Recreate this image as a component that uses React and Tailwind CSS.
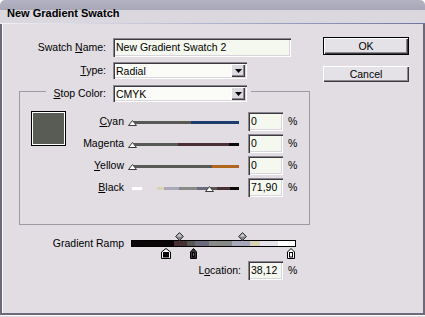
import React from "react";

const sunken = "shadow-[inset_1px_1px_0_#8a888e,inset_2px_2px_0_#3c3a40,inset_-1px_-1px_0_#ffffff,inset_-2px_-2px_0_#d8d5dc]";
const raised = "shadow-[inset_1px_1px_0_#ffffff,inset_-1px_-1px_0_#3c3a40,inset_-2px_-2px_0_#8a888e]";

const sliders = [
    { label: "Cyan", key: "C", rest: "yan", value: "0", thumb: 0, segs: [[59, "#575a54"], [48, "#1d3d6e"]] },
    { label: "Magenta", key: "", rest: "Magenta", value: "0", thumb: 0, segs: [[46, "#575a54"], [51, "#4a2f37"], [10, "#0a0808"]] },
    { label: "Yellow", key: "Y", rest: "ellow", value: "0", thumb: 0, segs: [[80, "#575a54"], [27, "#b0661c"]] },
    {
        label: "Black", key: "B", rest: "lack", value: "71,90", thumb: 77,
        segs: [[10, "#ffffff"], [15, "transparent"], [7, "#d9d4b2"], [15, "#a9a9bb"], [18, "#878a86"], [11, "#6a6a7c"], [9, "#555651"], [13, "#4a2f37"], [9, "#0a0808"]]
    }
];

const ramp = [[42, "#0a0608"], [13, "#4a2f37"], [8, "#555852"], [14, "#6a6a7c"], [23, "#888a88"], [18, "#a8a8bc"], [10, "#d8d4b2"], [18, "#e6e3ec"], [17, "#ffffff"]];

function Field({ value, className = "" }) {
    return (
        <div className={`h-[19px] ${sunken} bg-[#f5f8ee] pl-[3px] pt-[3px] leading-[12px] whitespace-nowrap ${className}`}>
            {value}
        </div>
    );
}

function Select({ value }) {
    return (
        <div className={`h-[17px] w-[134px] ${sunken} bg-[#fbfbf7] flex items-center pl-[3px] pr-[2px]`}>
            <span className="flex-1 leading-[12px]">{value}</span>
            <div className={`w-[14px] h-[13px] ${raised} bg-[#dcd9e0] flex items-center justify-center`}>
                <svg width="7" height="4" viewBox="0 0 7 4">
                    <path d="M0 0H7L3.5 4Z" fill="#000" />
                </svg>
            </div>
        </div>
    );
}

function Thumb() {
    return (
        <svg width="9" height="6" viewBox="0 0 9 6">
            <path d="M4.5 0.5L8.5 5.5H0.5Z" fill="#ffffff" stroke="#3a3a3a" />
        </svg>
    );
}

function Diamond() {
    return (
        <svg width="9" height="9" viewBox="0 0 9 9">
            <path d="M4.5 0.5L8.5 4.5L4.5 8.5L0.5 4.5Z" fill="#858589" stroke="#3a3a3a" />
            <path d="M4.5 1.8L7.2 4.5H1.8Z" fill="#cfcfd3" />
        </svg>
    );
}

function Stop({ inner, w = 10, selected = false }) {
    const r = w - 0.5;
    return (
        <svg width={w} height="11" viewBox={`0 0 ${w} 11`}>
            <path d={`M0.5 10.5V4L${w / 2} 0.5L${r} 4V10.5Z`} fill={selected ? "#3a3a3a" : "#ffffff"} stroke="#000" />
            <rect x="2.5" y="4.5" width={w - 5} height="4.5" fill={inner} stroke="#000" strokeWidth="1" />
        </svg>
    );
}

export default function App() {
    return (
        <div className="w-[425px] h-[317px] overflow-hidden bg-white font-['Liberation_Sans',Arial,sans-serif] text-[10.5px] text-black flex flex-col">
            {/* title bar */}
            <header className="h-[23px] shrink-0 rounded-t-[5px] bg-[linear-gradient(to_bottom,#b3b3c3_0px,#a7a7b7_10px,#dad7de_10px,#dad7de_23px)] pl-[7px] pt-[6px]">
                <span className="font-bold text-[11px] leading-[13px]">New Gradient Swatch</span>
            </header>
            <div className="h-px shrink-0 bg-[linear-gradient(to_right,#f2f1f5,#6e76a4)]" />

            <div className="flex-1 border-l-2 border-r-2 border-b-2 border-[#6c6a7a] bg-[#e1dde3]">
                <div className="h-full border-l border-white flex pl-[16px] pt-[14px]">
                    {/* left column */}
                    <div className="w-[291px] flex flex-col">
                        <div className="flex items-center h-[19px]">
                            <span className="w-[87px] text-right whitespace-nowrap">Swatch <span className="underline">N</span>ame:</span>
                            <Field value="New Gradient Swatch 2" className="ml-[7px] w-[178px]" />
                        </div>
                        <div className="flex items-center h-[17px] mt-[5px]">
                            <span className="w-[87px] text-right"><span className="underline">T</span>ype:</span>
                            <div className="ml-[7px]"><Select value="Radial" /></div>
                        </div>

                        <fieldset className="mt-[1px] w-[291px] border border-[#9e9aa4] pb-[27px]">
                            <legend className="ml-[26px] px-[4px] pt-[5px]">
                                <div className="flex items-center">
                                    <span className="w-[56px] text-right whitespace-nowrap"><span className="underline">S</span>top Color:</span>
                                    <div className="ml-[7px]"><Select value="CMYK" /></div>
                                </div>
                            </legend>
                            <div className="flex pt-[10px] pl-[11px]">
                                <div className="w-[35px] h-[35px] -mt-[1px] border border-black bg-white p-px">
                                    <div className="w-full h-full bg-[#595b55]" />
                                </div>
                                <div className="flex flex-col gap-[3px]">
                                    {sliders.map((s) => (
                                        <div key={s.label} className="flex items-start h-[19px]">
                                            <span className="w-[58px] text-right leading-[19px]">
                                                {s.key && <span className="underline">{s.key}</span>}{s.rest}
                                            </span>
                                            <div className="relative ml-[4px] w-[112px] h-[19px] pt-[9px] pl-[4px]">
                                                <div className="flex w-[107px] h-[3px]">
                                                    {s.segs.map(([w, c], i) => (
                                                        <div key={i} style={{ width: w, backgroundColor: c }} />
                                                    ))}
                                                </div>
                                                <div className="absolute top-[8px]" style={{ left: s.thumb }}>
                                                    <Thumb />
                                                </div>
                                            </div>
                                            <Field value={s.value} className="ml-[8px] w-[35px]" />
                                            <span className="ml-[5px] leading-[19px]">%</span>
                                        </div>
                                    ))}
                                </div>
                            </div>
                        </fieldset>

                        {/* gradient ramp */}
                        <div className="flex items-start mt-[7px]">
                            <span className="w-[105px] text-right leading-[13px] mt-[5px]">Gradient Ramp</span>
                            <div className="relative ml-[7px] w-[165px] h-[27px]">
                                <div className="mt-[8px] h-[7px] w-[165px] border border-black flex">
                                    {ramp.map(([w, c], i) => (
                                        <div key={i} style={{ width: w, backgroundColor: c }} />
                                    ))}
                                </div>
                                <div className="absolute top-0 left-[44px]"><Diamond /></div>
                                <div className="absolute top-0 left-[107px]"><Diamond /></div>
                                <div className="absolute top-[16px] left-[30px]"><Stop inner="#000000" /></div>
                                <div className="absolute top-[16px] left-[59px]"><Stop inner="#6a6a70" w={7} selected /></div>
                                <div className="absolute top-[16px] left-[156px]"><Stop inner="#ffffff" w={8} /></div>
                            </div>
                        </div>

                        <div className="flex items-center h-[19px] mt-[2px]">
                            <span className="w-[222px] text-right">L<span className="underline">o</span>cation:</span>
                            <Field value="38,12" className="ml-[7px] w-[35px]" />
                            <span className="ml-[5px]">%</span>
                        </div>
                    </div>

                    {/* buttons */}
                    <div className="ml-[13px] -mt-[1px] flex flex-col">
                        <div className="w-[86px] h-[18px] border border-black">
                            <div className={`h-full ${raised} bg-[#e4e1e7] flex items-center justify-center leading-none`}>OK</div>
                        </div>
                        <div className={`mt-[11px] w-[86px] h-[16px] ${raised} bg-[#e4e1e7] flex items-center justify-center leading-none`}>
                            Cancel
                        </div>
                    </div>
                </div>
            </div>
            <div className="h-[2px] shrink-0 border-t border-white bg-[#dedae2]" />
        </div>
    );
}
